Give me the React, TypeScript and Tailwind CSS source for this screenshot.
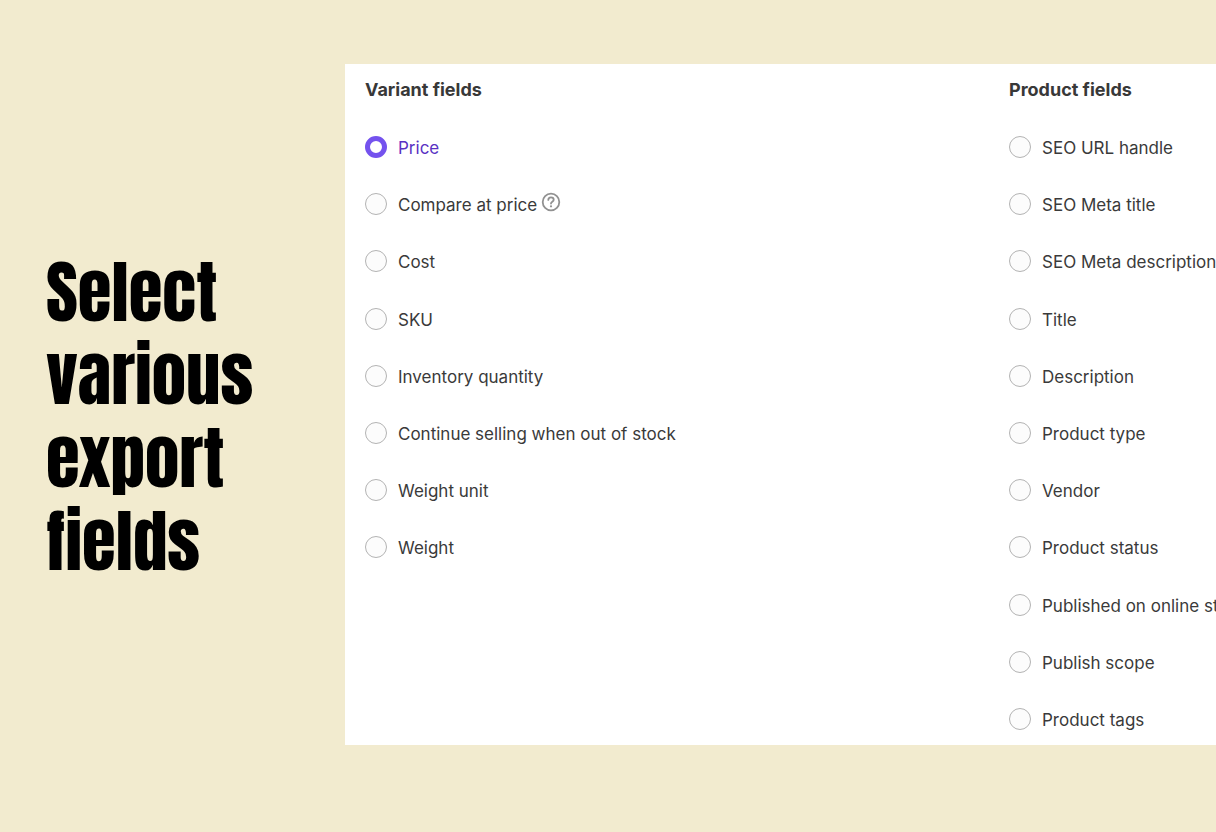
import { useState } from "react";

interface Field {
  id: string;
  label: string;
  help?: boolean;
}

const variantFields: Field[] = [
  { id: "price", label: "Price" },
  { id: "compare-at-price", label: "Compare at price", help: true },
  { id: "cost", label: "Cost" },
  { id: "sku", label: "SKU" },
  { id: "inventory-quantity", label: "Inventory quantity" },
  { id: "continue-selling", label: "Continue selling when out of stock" },
  { id: "weight-unit", label: "Weight unit" },
  { id: "weight", label: "Weight" },
];

const productFields: Field[] = [
  { id: "seo-url", label: "SEO URL handle" },
  { id: "seo-title", label: "SEO Meta title" },
  { id: "seo-description", label: "SEO Meta description" },
  { id: "title", label: "Title" },
  { id: "description", label: "Description" },
  { id: "product-type", label: "Product type" },
  { id: "vendor", label: "Vendor" },
  { id: "product-status", label: "Product status" },
  { id: "published", label: "Published on online store" },
  { id: "publish-scope", label: "Publish scope" },
  { id: "product-tags", label: "Product tags" },
];

const HelpIcon = () => (
  <svg className="w-5 h-5" viewBox="0 0 20 20" fill="none" stroke="#919191" strokeWidth="1.8" strokeLinecap="round">
    <circle cx="10" cy="10" r="8.3" />
    <path d="M7.3 7.9C7.3 6.3 8.5 5.3 10 5.3s2.7 1 2.7 2.4c0 1.9-2.7 2-2.7 3.8" />
    <circle cx="10" cy="14.3" r="1.1" fill="#919191" stroke="none" />
  </svg>
);

interface FieldListProps {
  title: string;
  fields: Field[];
  selected: string;
  onSelect: (id: string) => void;
}

const FieldList = ({ title, fields, selected, onSelect }: FieldListProps) => (
  <section className="flex flex-col whitespace-nowrap">
    <h2 className="text-lg leading-6 font-bold text-[#383838]">{title}</h2>
    {/* Both columns share the same 11 rows so they stay aligned */}
    <ul className="mt-[34px] flex-1 grid grid-rows-[repeat(11,22px)] gap-y-4 content-between">
      {fields.map((field) => (
        <li key={field.id} className="flex items-center">
          <input
            type="radio"
            id={field.id}
            name="export-field"
            checked={selected === field.id}
            onChange={() => onSelect(field.id)}
            className="appearance-none shrink-0 w-[22px] h-[22px] rounded-full border border-[#b3b3b3] bg-[#fcfcfc] checked:border-5 checked:border-[#7452ee] checked:bg-white"
          />
          <label
            htmlFor={field.id}
            className={`pl-[11px] pt-0.5 text-[17px] leading-5 ${
              selected === field.id ? "text-[#5a32c3]" : "text-[#3a3a3a]"
            }`}
          >
            {field.label}
          </label>
          {field.help && (
            <button type="button" aria-label="Help" className="ml-1 pb-1">
              <HelpIcon />
            </button>
          )}
        </li>
      ))}
    </ul>
  </section>
);

const App = () => {
  const [selected, setSelected] = useState("price");

  return (
    <main className="min-h-screen flex bg-[#f2ebcf] pt-16 pb-[87px] overflow-hidden">
      <div className="w-[345px] shrink-0 flex items-center pl-[46px] pt-6">
        <h1 className="font-[Anton,'Liberation_Sans_Narrow','Liberation_Sans',sans-serif] font-normal text-[69px] leading-[83px] text-black">
          Select
          <br />
          various
          <br />
          export
          <br />
          fields
        </h1>
      </div>

      {/* Card runs off the right side of the page */}
      <div className="flex-1 min-w-0 overflow-hidden grid grid-cols-[644px_1fr] bg-white pl-5 pt-3.5 pb-[15px] font-[Inter,'Liberation_Sans',sans-serif]">
        <FieldList title="Variant fields" fields={variantFields} selected={selected} onSelect={setSelected} />
        <FieldList title="Product fields" fields={productFields} selected={selected} onSelect={setSelected} />
      </div>
    </main>
  );
};

export default App;
